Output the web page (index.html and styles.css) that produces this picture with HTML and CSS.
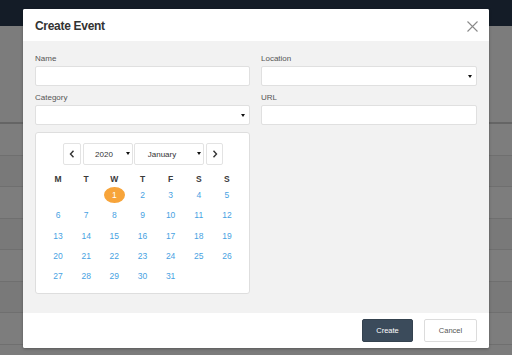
FILE: index.html
```html
<!DOCTYPE html>
<html>
<head>
<meta charset="utf-8">
<link rel="stylesheet" href="styles.css">
</head>
<body>
<div class="page">
  <div class="topbar"></div>
  <div class="content">
    <div class="spacer"></div>
    <div class="rows">
      <div class="row"></div><div class="row alt"></div><div class="row"></div><div class="row alt"></div>
      <div class="row"></div><div class="row alt"></div><div class="row"></div>
    </div>
  </div>
</div>
<div class="modal">
  <div class="m-header">
    <h1 class="m-title">Create Event</h1>
    <svg class="close" width="11" height="11" viewBox="0 0 11 11"><path d="M0.5 0.5L10.5 10.5M10.5 0.5L0.5 10.5" stroke="#8a8a8a" stroke-width="1.1" fill="none"/></svg>
  </div>
  <div class="m-body">
    <div class="form">
      <div class="field">
        <div class="label">Name</div>
        <div class="input"></div>
      </div>
      <div class="field">
        <div class="label">Location</div>
        <div class="input select"><span class="caret"></span></div>
      </div>
      <div class="field">
        <div class="label">Category</div>
        <div class="input select"><span class="caret"></span></div>
      </div>
      <div class="field">
        <div class="label">URL</div>
        <div class="input"></div>
      </div>
      <div class="calendar">
        <div class="nav">
          <div class="navbtn prev"><svg width="6" height="8" viewBox="0 0 6 8"><path d="M4.5 0.8L1.5 4L4.5 7.2" stroke="#333" stroke-width="1.4" fill="none"/></svg></div>
          <div class="navsel year">2020<span class="caret"></span></div>
          <div class="navsel month">January<span class="caret"></span></div>
          <div class="navbtn next"><svg width="6" height="8" viewBox="0 0 6 8"><path d="M1.5 0.8L4.5 4L1.5 7.2" stroke="#333" stroke-width="1.4" fill="none"/></svg></div>
        </div>
        <div class="weekdays">
          <span>M</span><span>T</span><span>W</span><span>T</span><span>F</span><span>S</span><span>S</span>
        </div>
        <div class="days">
          <span></span><span></span><span class="today"><b>1</b></span><span>2</span><span>3</span><span>4</span><span>5</span>
          <span>6</span><span>7</span><span>8</span><span>9</span><span>10</span><span>11</span><span>12</span>
          <span>13</span><span>14</span><span>15</span><span>16</span><span>17</span><span>18</span><span>19</span>
          <span>20</span><span>21</span><span>22</span><span>23</span><span>24</span><span>25</span><span>26</span>
          <span>27</span><span>28</span><span>29</span><span>30</span><span>31</span>
        </div>
      </div>
    </div>
  </div>
  <div class="m-footer">
    <div class="btn primary">Create</div>
    <div class="btn secondary">Cancel</div>
  </div>
</div>
</body>
</html>
```
FILE: styles.css
```css
html, body {
  margin: 0;
  padding: 0;
}
body {
  width: 512px;
  height: 355px;
  overflow: hidden;
  font-family: "Liberation Sans", Arial, sans-serif;
  background: #7b7b7b;
}
.page {
  display: flex;
  flex-direction: column;
  height: 355px;
}
.topbar {
  height: 26px;
  background: #141c27;
}
.content {
  flex: 1;
  display: flex;
  flex-direction: column;
  background: #7c7c7c;
}
.spacer {
  height: 96px;
  border-bottom: 2px solid #656565;
}
.rows {
  display: flex;
  flex-direction: column;
}
.row {
  height: 30.5px;
  border-bottom: 1px solid #6f6f6f;
  background: #7d7d7d;
}
.row.alt {
  background: #797979;
}
.modal {
  position: absolute;
  left: 23px;
  top: 9px;
  width: 466px;
  height: 339px;
  display: flex;
  flex-direction: column;
  background: #fff;
  border-radius: 2px;
  box-shadow: 0 1px 3px rgba(0,0,0,0.3);
  overflow: hidden;
}
.m-header {
  height: 32px;
  display: flex;
  align-items: center;
  justify-content: space-between;
  padding: 0 11px 0 12px;
  background: #fff;
}
.m-title {
  margin: 0;
  font-size: 12px;
  letter-spacing: -0.3px;
  font-weight: bold;
  color: #333;
  padding-top: 1px;
}
.close {
  margin-top: 2px;
}
.m-body {
  height: 272px;
  box-sizing: border-box;
  background: #f2f2f2;
  padding: 10px 12px 0 12px;
}
.form {
  display: grid;
  grid-template-columns: 215px 216px;
  column-gap: 11px;
  row-gap: 4px;
  align-items: start;
}
.field {
  display: flex;
  flex-direction: column;
}
.label {
  font-size: 8px;
  line-height: 15px;
  color: #555;
}
.input {
  position: relative;
  height: 20px;
  box-sizing: border-box;
  background: #fff;
  border: 1px solid #e0e0e0;
  border-radius: 2px;
}
.caret {
  position: absolute;
  right: 4px;
  top: 50%;
  margin-top: -1px;
  width: 0;
  height: 0;
  border-left: 2.5px solid transparent;
  border-right: 2.5px solid transparent;
  border-top: 3.5px solid #111;
}
.calendar {
  margin-top: 3px;
  height: 162px;
  box-sizing: border-box;
  background: #fff;
  border: 1px solid #dedede;
  border-radius: 3px;
  padding: 10px 8px 0 8px;
}
.nav {
  display: flex;
  justify-content: center;
  height: 22px;
  margin-left: 1px;
}
.navbtn, .navsel {
  position: relative;
  box-sizing: border-box;
  height: 22px;
  border: 1px solid #e3e3e3;
  border-radius: 2px;
  background: #fff;
  display: flex;
  align-items: center;
  justify-content: center;
  font-size: 8px;
  color: #333;
}
.navbtn {
  width: 18px;
}
.prev { margin-right: 2px; }
.year { width: 50px; margin-right: 1px; padding-right: 8px; }
.month { width: 70px; margin-right: 2px; padding-right: 14px; }
.next { width: 17px; }
.navsel .caret {
  right: 2px;
  margin-top: -2px;
}
.weekdays {
  margin-top: 8px;
  display: grid;
  grid-template-columns: repeat(7, 1fr);
  height: 12px;
  line-height: 12px;
  font-size: 8.5px;
  color: #3a3a3a;
  text-align: center;
}
.weekdays span {
  font-weight: bold;
}
.days {
  display: grid;
  grid-template-columns: repeat(7, 1fr);
  grid-auto-rows: 20.3px;
  font-size: 8.5px;
  color: #47a2e2;
  text-align: center;
}
.days span {
  display: flex;
  align-items: center;
  justify-content: center;
}
.today b {
  display: flex;
  align-items: center;
  justify-content: center;
  width: 21px;
  height: 16px;
  border-radius: 50%;
  background: #f7a43a;
  color: #fff;
  font-weight: normal;
}
.m-footer {
  flex: 1;
  display: flex;
  justify-content: flex-end;
  align-items: flex-start;
  padding: 6px 12px 0 0;
  gap: 11px;
  background: #fff;
}
.btn {
  height: 23px;
  box-sizing: border-box;
  display: flex;
  align-items: center;
  justify-content: center;
  font-size: 7.5px;
  border-radius: 2px;
}
.primary {
  width: 51px;
  background: #3b4b5b;
  color: #fff;
  border: 1px solid #34424f;
}
.secondary {
  width: 53px;
  background: #fff;
  color: #555;
  border: 1px solid #dcdcdc;
}
```
